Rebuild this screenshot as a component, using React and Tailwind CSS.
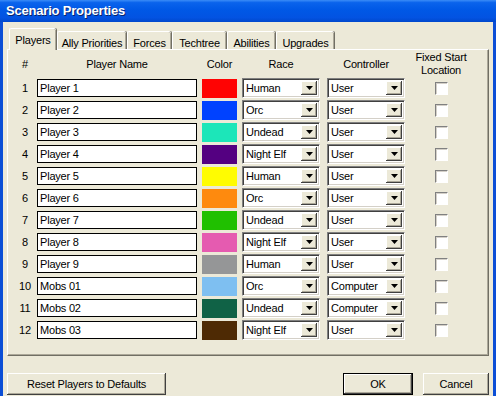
import React from "react";

const rows = [
  ["1", "Player 1", "#FF0303", "Human", "User"],
  ["2", "Player 2", "#0042FF", "Orc", "User"],
  ["3", "Player 3", "#1CE6B9", "Undead", "User"],
  ["4", "Player 4", "#540081", "Night Elf", "User"],
  ["5", "Player 5", "#FFFC01", "Human", "User"],
  ["6", "Player 6", "#FE8A0E", "Orc", "User"],
  ["7", "Player 7", "#20C000", "Undead", "User"],
  ["8", "Player 8", "#E55BB0", "Night Elf", "User"],
  ["9", "Player 9", "#959697", "Human", "User"],
  ["10", "Mobs 01", "#7EBFF1", "Orc", "Computer"],
  ["11", "Mobs 02", "#106246", "Undead", "Computer"],
  ["12", "Mobs 03", "#4E2A04", "Night Elf", "User"],
];

const tabs = [
  ["Players", "w-[47px]"],
  ["Ally Priorities", "w-[69px]"],
  ["Forces", "w-[44px]"],
  ["Techtree", "w-[54px]"],
  ["Abilities", "w-[48px]"],
  ["Upgrades", "w-[58px]"],
];

function Combo({ value }) {
  return (
    <div className="w-[78px] h-[20px] bg-white flex items-center border border-t-[#808080] border-l-[#808080] border-b-white border-r-white shadow-[inset_1px_1px_0_#404040,inset_-1px_-1px_0_#D4D0C8] pl-[3px] pr-[2px] py-[2px]">
      <span className="flex-1 leading-[14px] truncate">{value}</span>
      <div className="w-[16px] h-full bg-[#ECE9D8] flex items-center justify-center shadow-[inset_-1px_-1px_0_#404040,inset_1px_1px_0_#ffffff,inset_-2px_-2px_0_#ACA899]">
        <svg width="7" height="4" viewBox="0 0 7 4">
          <polygon points="0,0 7,0 3.5,4" fill="#000" />
        </svg>
      </div>
    </div>
  );
}

function Btn({ children, className = "", def = false }) {
  return (
    <div
      className={
        "h-[22px] flex items-center justify-center bg-[#ECE9D8] " +
        (def
          ? "border border-black shadow-[inset_-1px_-1px_0_#404040,inset_1px_1px_0_#ffffff,inset_-2px_-2px_0_#ACA899] "
          : "shadow-[inset_-1px_-1px_0_#404040,inset_1px_1px_0_#ffffff,inset_-2px_-2px_0_#ACA899] ") +
        className
      }
    >
      {children}
    </div>
  );
}

export default function App() {
  return (
    <div className="w-[496px] h-[396px] overflow-hidden bg-[#0b4ed6] flex flex-col font-['Liberation_Sans',Arial,sans-serif] text-[11px] tracking-[-0.2px] text-black">
      <div className="h-[22px] shrink-0 flex items-center pl-[6px] bg-[linear-gradient(to_bottom,#3b8cf7_0%,#0a63ec_12%,#0058e6_45%,#0353e2_80%,#0048cc_100%)]">
        <span className="text-white font-bold text-[13px] tracking-[-0.2px] [text-shadow:1px_1px_0_#0a246a]">
          Scenario Properties
        </span>
      </div>
      <div className="flex-1 mx-[3px] bg-[#ECE9D8] px-[4px] pt-[6px] flex flex-col">
        <div className="h-[21px] flex items-end pl-[2px] relative z-10">
          {tabs.map(([t, w], i) =>
            i === 0 ? (
              <div
                key={t}
                className={`${w} h-[22px] -mb-px bg-[#ECE9D8] rounded-t-[2px] border-l border-t border-white shadow-[inset_-1px_0_0_#ACA899,1px_0_0_#716F64] flex justify-center pt-[3px] whitespace-nowrap`}
              >
                {t}
              </div>
            ) : (
              <div
                key={t}
                className={`${w} h-[18px] ml-px bg-[#ECE9D8] rounded-t-[2px] border-l border-t border-white shadow-[inset_-1px_0_0_#ACA899,1px_0_0_#716F64] flex justify-center pt-[3px] whitespace-nowrap`}
              >
                {t}
              </div>
            )
          )}
        </div>
        <div className="h-[307px] border-l border-t border-white border-r border-b border-r-[#716F64] border-b-[#716F64] shadow-[inset_-1px_-1px_0_#ACA899] pt-[1px] flex flex-col">
          <div className="h-[26px] flex items-center pl-[7px] leading-[13px]">
            <div className="w-[20px] text-center">#</div>
            <div className="w-[160px] ml-[2px] text-center">Player Name</div>
            <div className="w-[35px] ml-[5px] text-center">Color</div>
            <div className="w-[78px] ml-[5px] text-center">Race</div>
            <div className="w-[78px] ml-[7px] text-center">Controller</div>
            <div className="w-[72px] text-center">
              Fixed Start
              <br />
              Location
            </div>
          </div>
          {rows.map(([n, name, color, race, ctrl]) => (
            <div key={n} className="h-[22px] flex items-center pl-[7px]">
              <div className="w-[20px] text-center">{n}</div>
              <div className="w-[160px] h-[18px] ml-[2px] bg-white border border-black flex items-center pl-[2px] leading-[14px]">
                {name}
              </div>
              <div className="w-[35px] h-[19px] ml-[5px]" style={{ backgroundColor: color }} />
              <div className="ml-[5px]">
                <Combo value={race} />
              </div>
              <div className="ml-[7px]">
                <Combo value={ctrl} />
              </div>
              <div className="w-[72px] flex justify-center">
                <div className="w-[13px] h-[13px] bg-white border border-t-[#808080] border-l-[#808080] border-b-white border-r-white shadow-[inset_1px_1px_0_#D4D0C8]" />
              </div>
            </div>
          ))}
        </div>
        <div className="mt-[17px] flex justify-between">
          <Btn className="w-[159px]">Reset Players to Defaults</Btn>
          <div className="flex gap-[10px]">
            <Btn def className="w-[70px]">OK</Btn>
            <Btn className="w-[66px]">Cancel</Btn>
          </div>
        </div>
      </div>
    </div>
  );
}
